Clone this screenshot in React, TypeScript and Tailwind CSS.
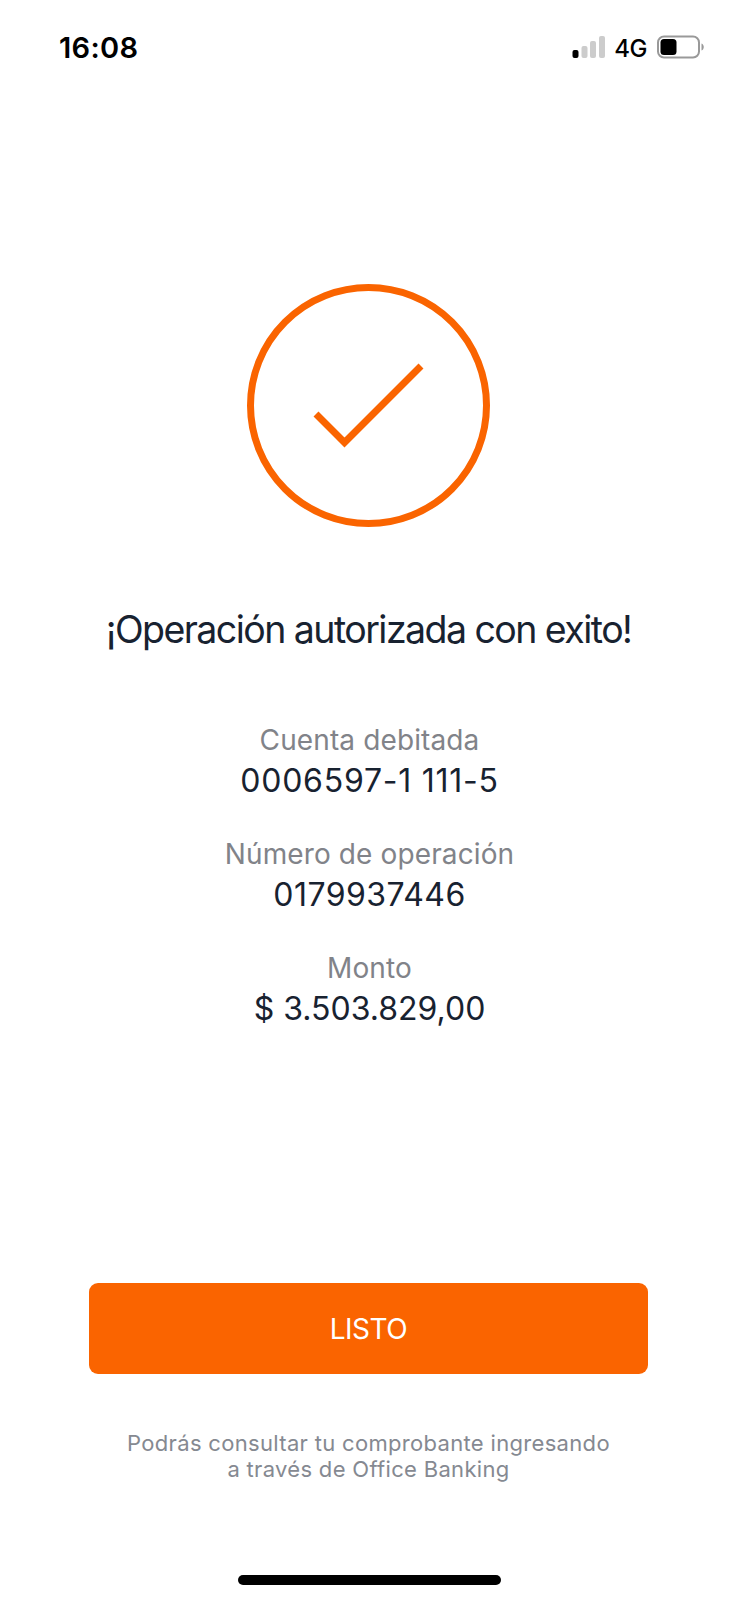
interface DetailProps {
  label: string;
  value: string;
  tracking: string;
}

const details: DetailProps[] = [
  { label: 'Cuenta debitada', value: '0006597-1 111-5', tracking: 'tracking-[0.75px]' },
  { label: 'Número de operación', value: '0179937446', tracking: 'tracking-[0.45px]' },
  { label: 'Monto', value: '$ 3.503.829,00', tracking: 'tracking-normal' },
];

function StatusBar() {
  return (
    <header className="flex h-[94px] items-center justify-between pl-[59px] pr-[34px]">
      <span className="text-[29px] font-semibold leading-none tracking-[0.3px] text-black">16:08</span>
      <div className="flex items-center">
        <svg width="33" height="22" viewBox="0 0 33 22">
          <rect x="0.5" y="14" width="6" height="8" rx="2" fill="#000" />
          <rect x="9.5" y="10" width="6" height="12" rx="2" fill="#ccc" />
          <rect x="18" y="5" width="6" height="17" rx="2" fill="#ccc" />
          <rect x="27" y="0" width="6" height="22" rx="2" fill="#ccc" />
        </svg>
        <span className="ml-[9px] pt-[3px] text-[24px] font-medium leading-none tracking-[-0.5px] text-black">4G</span>
        <svg className="ml-[10px]" width="48" height="24" viewBox="0 0 48 24">
          <rect x="1" y="1.5" width="41" height="21" rx="6" fill="none" stroke="#999" strokeWidth="2" />
          <rect x="3.5" y="4" width="16" height="16" rx="3.5" fill="#000" />
          <path d="M44.5 8.5c3 1 3 6 0 7z" fill="#999" />
        </svg>
      </div>
    </header>
  );
}

function Detail({ label, value, tracking }: DetailProps) {
  return (
    <div className="flex flex-col items-center whitespace-nowrap">
      <span className="text-[28px] leading-[40px] tracking-[0.12px] text-[#818389]">{label}</span>
      <span className={`text-[32px] leading-[42px] text-[#182230] ${tracking}`}>{value}</span>
    </div>
  );
}

export default function App() {
  return (
    <div className="flex h-[1600px] w-[739px] flex-col bg-white font-['Inter',sans-serif]">
      <StatusBar />
      <main className="flex flex-col items-center pr-[2px]">
        <svg className="mt-[190px]" width="244" height="244" viewBox="0 0 244 244" fill="none" stroke="#fa6400" strokeWidth="7">
          <circle cx="121.5" cy="121.5" r="118" />
          <path d="M69 130l28.5 28.5L174 82" />
        </svg>
        <h1 className="mt-[76px] whitespace-nowrap text-[37.5px] leading-[52px] tracking-[-1.55px] text-[#182230]">
          ¡Operación autorizada con exito!
        </h1>
        <div className="mt-[64px] flex flex-col gap-8 pl-[2px]">
          {details.map(detail => (
            <Detail key={detail.label} {...detail} />
          ))}
        </div>
        <button className="mt-[253px] h-[91px] w-[559px] rounded-[9px] bg-[#fa6400] text-[28px] tracking-[-0.5px] text-white">
          LISTO
        </button>
        <p className="mt-[56px] text-center text-[22px] leading-[26px] tracking-[0.32px] text-[#858991]">
          Podrás consultar tu comprobante ingresando
          <br />
          a través de Office Banking
        </p>
      </main>
      <div className="mx-auto mb-[15px] mt-auto h-[10px] w-[263px] rounded-full bg-black" />
    </div>
  );
}
